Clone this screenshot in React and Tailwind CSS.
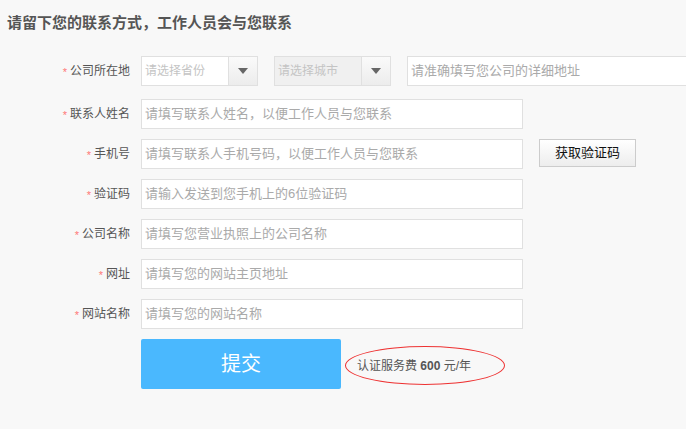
const font = { fontFamily: '"Liberation Sans", "Noto Sans CJK SC", sans-serif' };

const rows = [
  { label: "联系人姓名", placeholder: "请填写联系人姓名，以便工作人员与您联系" },
  { label: "手机号", placeholder: "请填写联系人手机号码，以便工作人员与您联系", code: true },
  { label: "验证码", placeholder: "请输入发送到您手机上的6位验证码" },
  { label: "公司名称", placeholder: "请填写您营业执照上的公司名称" },
  { label: "网址", placeholder: "请填写您的网站主页地址" },
  { label: "网站名称", placeholder: "请填写您的网站名称" },
];

function Label({ children }) {
  return (
    <div className="w-[131px] shrink-0 flex items-center justify-end pr-[1px] text-[12px] text-[#555]">
      <span className="text-[#f77] mr-[3px] text-[11px] leading-none mt-[3px]">*</span>
      {children}
    </div>
  );
}

function Select({ placeholder, disabled }) {
  return (
    <div
      className={`flex shrink-0 h-[30px] w-[117px] border border-[#e0e0e0] ${
        disabled ? "bg-[#f0f0f0]" : "bg-white"
      }`}
    >
      <div className="flex-1 flex items-center pl-[3px] text-[12px] text-[#c4c4c4] whitespace-nowrap">
        {placeholder}
      </div>
      <div className="w-[29px] flex items-center justify-center border-l border-[#e0e0e0] bg-gradient-to-b from-[#fafafa] to-[#ececec]">
        <svg width="10" height="6" viewBox="0 0 10 6">
          <path d="M0 0h10L5 6z" fill="#666" />
        </svg>
      </div>
    </div>
  );
}

function Input({ placeholder, className = "w-[382px]" }) {
  return (
    <div
      className={`h-[30px] shrink-0 flex items-center pl-[3px] border border-[#e0e0e0] bg-white text-[13px] text-[#aaa] whitespace-nowrap ${className}`}
    >
      {placeholder}
    </div>
  );
}

export default function App() {
  return (
    <div className="w-[686px] h-[429px] overflow-hidden bg-[#f8f8f8]" style={font}>
      <h1 className="pl-[7px] pt-[13px] text-[15px] leading-[20px] font-bold text-[#555]">
        请留下您的联系方式，工作人员会与您联系
      </h1>

      <div className="mt-[23px] flex flex-col">
        {/* 公司所在地 */}
        <div className="flex gap-[10px]">
          <Label>公司所在地</Label>
          <Select placeholder="请选择省份" />
          <div className="ml-[6px] shrink-0">
            <Select placeholder="请选择城市" disabled />
          </div>
          <Input placeholder="请准确填写您公司的详细地址" className="w-[300px] ml-[6px]" />
        </div>

        <div className="mt-[13px] flex flex-col gap-[10px]">
          {rows.map((r) => (
            <div key={r.label} className="flex gap-[10px]">
              <Label>{r.label}</Label>
              <Input placeholder={r.placeholder} />
              {r.code && (
                <button className="ml-[6px] shrink-0 h-[28px] w-[97px] border border-[#ccc] bg-gradient-to-b from-white to-[#ededed] text-[13px] font-normal text-[#111]">
                  获取验证码
                </button>
              )}
            </div>
          ))}

          {/* 提交 */}
          <div className="flex items-center pl-[141px]">
            <button className="shrink-0 h-[50px] w-[200px] rounded-[2px] bg-[#4ab8fe] text-[20px] text-white">
              提交
            </button>
            <div className="ml-[4px] mt-[3px] shrink-0 h-[39px] w-[160px] flex items-center pl-[11px] rounded-[50%] border border-[#e33] text-[12px] text-[#555]">
              认证服务费&nbsp;<span className="font-bold">600</span>&nbsp;元/年
            </div>
          </div>
        </div>
      </div>
    </div>
  );
}
